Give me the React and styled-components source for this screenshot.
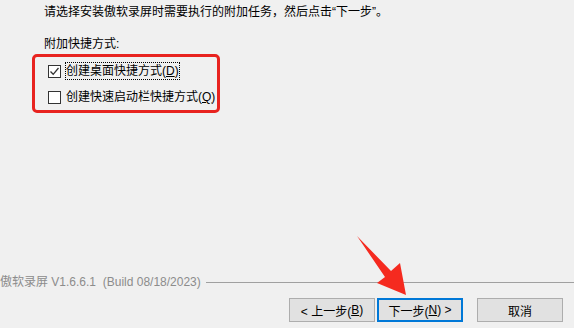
import React from 'react';
import styled, { createGlobalStyle } from 'styled-components';

const GlobalStyle = createGlobalStyle`
  html, body {
    margin: 0;
    padding: 0;
    background: #f0f0f0;
  }
  body {
    font-family: "Liberation Sans", "Noto Sans CJK SC", sans-serif;
    font-size: 12px;
    color: #000;
  }
`;

const Page = styled.div`
  position: relative;
  width: 574px;
  height: 328px;
  overflow: hidden;
  display: flex;
  flex-direction: column;
  background: #f0f0f0;
`;

const Content = styled.div`
  display: flex;
  flex-direction: column;
  padding: 4px 0 0 44px;
`;

const Line = styled.div`
  line-height: 16px;
  height: 16px;
  white-space: nowrap;
`;

const Heading = styled(Line)`
  margin-top: 16px;
`;

const Highlight = styled.div`
  margin: 2px 0 0 -12px;
  width: 188px;
  height: 59px;
  box-sizing: border-box;
  border: 3px solid #e8231f;
  border-radius: 5px;
  display: flex;
  flex-direction: column;
  gap: 8px;
  padding: 5px 0 0 13px;
`;

const Option = styled.label`
  display: flex;
  align-items: center;
  gap: 4px;
  height: 18px;
`;

const Box = styled.span`
  width: 13px;
  height: 13px;
  box-sizing: border-box;
  border: 1px solid #333;
  background: #fff;
  display: flex;
  align-items: center;
  justify-content: center;
  flex: none;
`;

const OptionText = styled.span`
  line-height: 16px;
  padding: 0;
  white-space: nowrap;
  border: 1px ${(p) => (p.$focused ? 'dotted #000' : 'solid transparent')};
`;

const Key = styled.span`
  text-decoration: underline;
`;

const Spacer = styled.div`
  flex: 1;
`;

const Divider = styled.div`
  display: flex;
  align-items: center;
  height: 16px;
  gap: 5px;
`;

const Version = styled.span`
  color: #8c8c8c;
  white-space: nowrap;
  line-height: 16px;
`;

const Rule = styled.div`
  flex: 1;
  height: 1px;
  background: #a0a0a0;
`;

const Buttons = styled.div`
  display: flex;
  justify-content: flex-end;
  padding: 8px 11px 6px 0;
`;

const Button = styled.button`
  width: 86px;
  height: 24px;
  box-sizing: border-box;
  margin-left: ${(p) => p.$gap || 0}px;
  background: #e1e1e1;
  border: ${(p) => (p.$primary ? '2px solid #0078d7' : '1px solid #adadad')};
  font-family: "Liberation Sans", "Noto Sans CJK SC", sans-serif;
  font-size: 12px;
  color: #000;
  padding: 0;
  display: flex;
  align-items: center;
  justify-content: center;
`;

const Arrow = styled.svg`
  position: absolute;
  left: 0;
  top: 0;
  pointer-events: none;
`;

const Check = () => (
  <svg width="11" height="11" viewBox="0 0 11 11">
    <path d="M1.5 5.5 L4.2 8.3 L9.5 2" fill="none" stroke="#333" strokeWidth="1.3" />
  </svg>
);

export default function App() {
  return (
    <Page>
      <GlobalStyle />
      <Content>
        <Line>请选择安装傲软录屏时需要执行的附加任务，然后点击“下一步”。</Line>
        <Heading>附加快捷方式:</Heading>
        <Highlight>
          <Option>
            <Box>
              <Check />
            </Box>
            <OptionText $focused>
              创建桌面快捷方式(<Key>D</Key>)
            </OptionText>
          </Option>
          <Option>
            <Box />
            <OptionText>
              创建快速启动栏快捷方式(<Key>Q</Key>)
            </OptionText>
          </Option>
        </Highlight>
      </Content>
      <Spacer />
      <Divider>
        <Version>傲软录屏 V1.6.6.1&nbsp;&nbsp;(Build 08/18/2023)</Version>
        <Rule />
      </Divider>
      <Buttons>
        <Button>
          &lt; 上一步(<Key>B</Key>)
        </Button>
        <Button $primary $gap={2}>
          下一步(<Key>N</Key>) &gt;
        </Button>
        <Button $gap={14}>取消</Button>
      </Buttons>
      <Arrow width="574" height="328" viewBox="0 0 574 328">
        <polygon
          points="357,236 391,271 400,263 406,295 377,283 385,277"
          fill="#f52a1f"
        />
      </Arrow>
    </Page>
  );
}
